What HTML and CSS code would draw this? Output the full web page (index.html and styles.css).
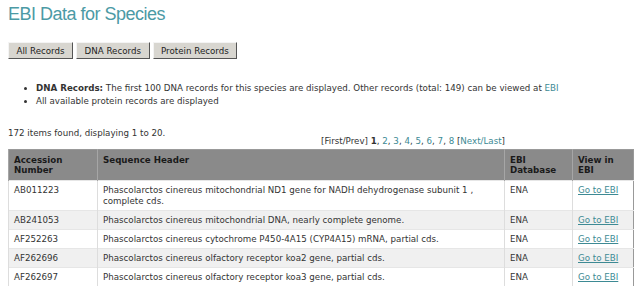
FILE: index.html
```html
<!DOCTYPE html>
<html lang="en">
<head>
    <meta charset="UTF-8">
    <title>EBI Data for Species</title>
    <link rel="stylesheet" href="styles.css">
</head>
<body>

<h1 class="title">EBI Data for Species</h1>

<div class="tabs">
    <button class="tab">All Records</button>
    <button class="tab">DNA Records</button>
    <button class="tab">Protein Records</button>
</div>

<ul class="notes">
    <li><b>DNA Records:</b> The first 100 DNA records for this species are displayed. Other records (total: 149) can be viewed at <a href="#" class="plain-link">EBI</a></li>
    <li>All available protein records are displayed</li>
</ul>

<div class="result-bar">
    <div class="count">172 items found, displaying 1 to 20.</div>
    <div class="pager">[First/Prev] <b>1</b>, <a href="#">2</a>, <a href="#">3</a>, <a href="#">4</a>, <a href="#">5</a>, <a href="#">6</a>, <a href="#">7</a>, <a href="#">8</a> [<a href="#">Next/Last</a>]</div>
</div>

<table class="records">
    <thead>
        <tr>
            <th class="col-acc">Accession Number</th>
            <th class="col-head">Sequence Header</th>
            <th class="col-db">EBI Database</th>
            <th class="col-view">View in EBI</th>
        </tr>
    </thead>
    <tbody>
        <tr>
            <td>AB011223</td>
            <td>Phascolarctos cinereus mitochondrial ND1 gene for NADH dehydrogenase subunit 1 ,<br>complete cds.</td>
            <td>ENA</td>
            <td><a href="#">Go to EBI</a></td>
        </tr>
        <tr class="alt">
            <td>AB241053</td>
            <td>Phascolarctos cinereus mitochondrial DNA, nearly complete genome.</td>
            <td>ENA</td>
            <td><a href="#">Go to EBI</a></td>
        </tr>
        <tr>
            <td>AF252263</td>
            <td>Phascolarctos cinereus cytochrome P450-4A15 (CYP4A15) mRNA, partial cds.</td>
            <td>ENA</td>
            <td><a href="#">Go to EBI</a></td>
        </tr>
        <tr class="alt">
            <td>AF262696</td>
            <td>Phascolarctos cinereus olfactory receptor koa2 gene, partial cds.</td>
            <td>ENA</td>
            <td><a href="#">Go to EBI</a></td>
        </tr>
        <tr>
            <td>AF262697</td>
            <td>Phascolarctos cinereus olfactory receptor koa3 gene, partial cds.</td>
            <td>ENA</td>
            <td><a href="#">Go to EBI</a></td>
        </tr>
    </tbody>
</table>

</body>
</html>
```

FILE: styles.css
```css
body {
    margin: 0;
    padding: 0 6px 0 8px;
    background-color: #fff;
    color: #333;
    font-family: "DejaVu Sans", Verdana, sans-serif;
    font-size: 8.7px;
}
a {
    color: #3d8a94;
}
.title {
    margin: 3px 0 0 0;
    font-family: "Liberation Sans", Arial, sans-serif;
    font-weight: normal;
    font-size: 18px;
    letter-spacing: -0.5px;
    line-height: 22px;
    color: #4c9aa5;
}
.tabs {
    display: flex;
    gap: 3px;
    margin-top: 17px;
}
.tab {
    margin: 0;
    font-family: "DejaVu Sans", Verdana, sans-serif;
    font-size: 8.7px;
    color: #222;
    background-color: #d8d6d0;
    border: 1px solid;
    border-color: #f4f4f4 #555 #555 #f4f4f4;
    height: 17px;
    padding: 0 7.5px;
}
.notes {
    margin: 23px 0 0 0;
    padding-left: 28px;
    line-height: 13px;
}
.notes b {
    color: #333;
}
.plain-link {
    text-decoration: none;
}
.result-bar {
    display: flex;
    margin-top: 20px;
    height: 21px;
}
.count {
    width: 50%;
}
.pager {
    padding-top: 8px;
}
.pager a {
    text-decoration: none;
}
.records {
    width: 100%;
    border-collapse: collapse;
    border: 1px solid #999;
}
.records th {
    background-color: #8a8a8a;
    color: #1a1a1a;
    text-align: left;
    vertical-align: top;
    padding: 5px 5px;
    line-height: 10px;
    border-left: 1px solid #a6a6a6;
}
.records td {
    vertical-align: top;
    padding: 4px 5px 3px 5px;
    line-height: 11px;
    border-left: 1px solid #ddd;
    border-top: 1px solid #e6e6e6;
}
.records tr.alt td {
    background-color: #f0f0f0;
}
.col-acc {
    width: 78px;
}
.col-db {
    width: 57px;
}
.col-view {
    width: 50px;
}
```
